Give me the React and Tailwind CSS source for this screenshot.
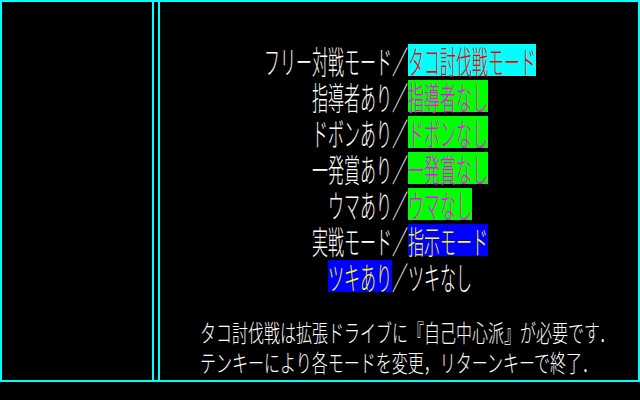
const ROWS = [
  { left: "フリー対戦モード", right: "タコ討伐戦モード", sel: "right", box: "bg-[#00ffff] text-[#ff0000]" },
  { left: "指導者あり", right: "指導者なし", sel: "right", box: "bg-[#00ff00] text-[#ff00ff]" },
  { left: "ドボンあり", right: "ドボンなし", sel: "right", box: "bg-[#00ff00] text-[#ff00ff]" },
  { left: "一発賞あり", right: "一発賞なし", sel: "right", box: "bg-[#00ff00] text-[#ff00ff]" },
  { left: "ウマあり", right: "ウマなし", sel: "right", box: "bg-[#00ff00] text-[#ff00ff]" },
  { left: "実戦モード", right: "指示モード", sel: "right", box: "bg-[#0000ff] text-[#ffff00]" },
  { left: "ツキあり", right: "ツキなし", sel: "left", box: "bg-[#0000ff] text-[#ffff00]" },
];

function OptionRow({ row }) {
  const plain = "text-white";
  return (
    <div className="flex justify-center h-4 leading-4 mb-[2px]">
      <span className={`inline-block h-4 ${row.sel === "left" ? row.box : plain}`}>{row.left}</span>
      <span className="inline-block h-4 text-white">／</span>
      <span className={`inline-block h-4 ${row.sel === "right" ? row.box : plain}`}>{row.right}</span>
    </div>
  );
}

export default function App() {
  return (
    <div
      className="w-[640px] h-[400px] bg-black overflow-hidden font-light"
      style={{ fontFamily: '"Noto Sans CJK JP", "Noto Sans", sans-serif' }}
    >
      <div className="h-[382px] border-2 border-[#00ffff] flex">
        <div className="w-[150px]" />
        <div className="w-[2px] bg-[#00ffff]" />
        <div className="w-[4px]" />
        <div className="w-[2px] bg-[#00ffff]" />

        <div className="flex-1 pt-[42px] text-[16px]">
          <div className="h-[252px] pl-[2px]">
            <div className="origin-top scale-y-200">
              {ROWS.map((row, i) => (
                <OptionRow key={i} row={row} />
              ))}
            </div>
          </div>

          <div className="pt-[20px] pl-[40px] text-white">
            <div className="origin-top scale-y-150 leading-[20px]">
              <div>タコ討伐戦は拡張ドライブに『自己中心派』が必要です．</div>
              <div>テンキーにより各モードを変更，リターンキーで終了．</div>
            </div>
          </div>
        </div>
      </div>
    </div>
  );
}
